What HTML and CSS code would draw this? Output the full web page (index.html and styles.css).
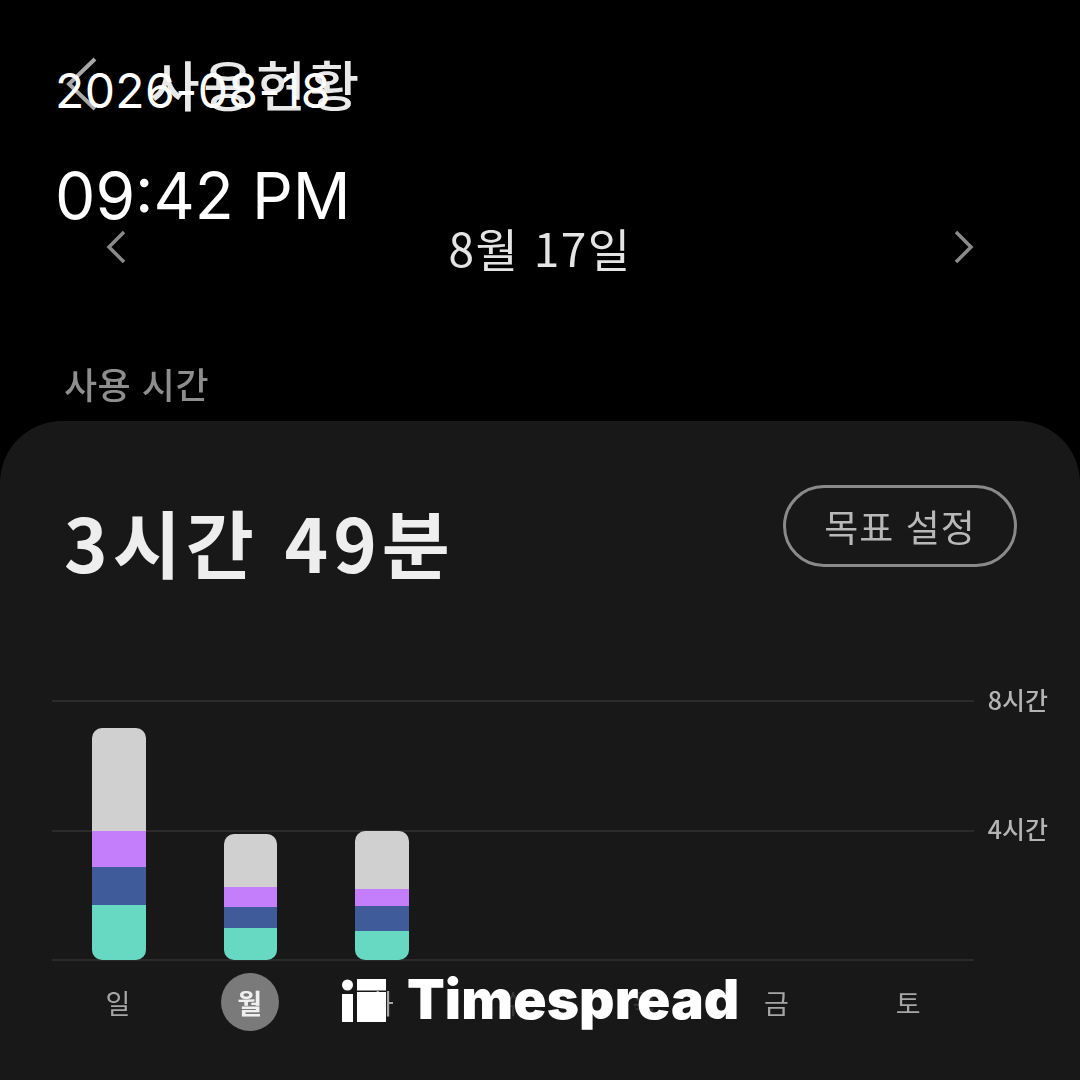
FILE: index.html
```html
<!DOCTYPE html>
<html lang="ko">
<head>
  <meta charset="UTF-8" />
  <meta name="viewport" content="width=device-width, initial-scale=1.0"/>
  <title>사용 현황</title>
  <link rel="stylesheet" href="styles.css">
</head>
<body>

  <div class="screen">
    <header class="topbar">
      <svg class="back" width="40" height="64" viewBox="0 0 40 64">
        <path d="M33 7 L7 32 L33 57" fill="none" stroke="#a8a8a8" stroke-width="4"/>
      </svg>
      <h1 class="title">사용현황</h1>
    </header>

    <div class="date-nav">
      <svg width="22" height="34" viewBox="0 0 22 34">
        <path d="M19 2 L4 17 L19 32" fill="none" stroke="#8a8a8a" stroke-width="3.5"/>
      </svg>
      <span class="date-label">8월 17일</span>
      <svg width="22" height="34" viewBox="0 0 22 34">
        <path d="M3 2 L18 17 L3 32" fill="none" stroke="#8a8a8a" stroke-width="3.5"/>
      </svg>
    </div>

    <div class="section-label">사용 시간</div>

    <section class="card">
      <div class="card-head">
        <div class="total">3시간 49분</div>
        <div class="goal-btn">목표 설정</div>
      </div>

      <div class="chart">
        <div class="grid-row"><span class="grid-line"></span><span class="grid-label">8시간</span></div>
        <div class="grid-row"><span class="grid-line"></span><span class="grid-label">4시간</span></div>
        <div class="grid-row"><span class="grid-line"></span></div>

        <div class="bars">
          <div class="bar">
            <div class="seg seg-other" style="height:103px"></div>
            <div class="seg seg-purple" style="height:36px"></div>
            <div class="seg seg-blue" style="height:38px"></div>
            <div class="seg seg-teal" style="height:55px"></div>
          </div>
          <div class="bar">
            <div class="seg seg-other" style="height:53px"></div>
            <div class="seg seg-purple" style="height:20px"></div>
            <div class="seg seg-blue" style="height:21px"></div>
            <div class="seg seg-teal" style="height:32px"></div>
          </div>
          <div class="bar">
            <div class="seg seg-other" style="height:58px"></div>
            <div class="seg seg-purple" style="height:17px"></div>
            <div class="seg seg-blue" style="height:25px"></div>
            <div class="seg seg-teal" style="height:29px"></div>
          </div>
        </div>
      </div>

      <div class="days">
        <span class="day">일</span>
        <span class="day today">월</span>
        <span class="day">화</span>
        <span class="day day-hidden">수</span>
        <span class="day day-hidden">목</span>
        <span class="day">금</span>
        <span class="day">토</span>
      </div>
    </section>
  </div>

  <!-- stamp and watermark lie over the screenshot -->
  <div class="stamp">
    <div class="stamp-date">2026-08-18</div>
    <div class="stamp-time">09:42 PM</div>
  </div>

  <div class="watermark">
    <svg width="44" height="44" viewBox="0 0 44 44">
      <circle cx="5.5" cy="6" r="5.5" fill="#fff"/>
      <rect x="0" y="15" width="11" height="28" fill="#fff"/>
      <rect x="15" y="0" width="29" height="11.5" fill="#fff"/>
      <rect x="15" y="13" width="29" height="30" fill="#fff"/>
    </svg>
    <span class="wm-text">Timespread</span>
  </div>

</body>
</html>
```

FILE: styles.css
```css
* {
  box-sizing: border-box;
}

body {
  margin: 0;
  width: 1080px;
  height: 1080px;
  overflow: hidden;
  position: relative;
  background: #000;
  font-family: "Noto Sans CJK KR", "Noto Sans", sans-serif;
}

.screen {
  height: 1080px;
  display: flex;
  flex-direction: column;
  filter: blur(0.6px);
}

.topbar {
  height: 128px;
  padding: 52px 0 0 62px;
  display: flex;
  align-items: flex-start;
  gap: 48px;
}

.title {
  margin: 0;
  font-size: 54px;
  line-height: 64px;
  font-weight: 500;
  letter-spacing: 3.5px;
  color: #e8e8e8;
}

.date-nav {
  height: 100px;
  padding: 0 105px;
  margin-top: 69px;
  display: flex;
  align-items: center;
  justify-content: space-between;
}

.date-label {
  font-size: 46px;
  letter-spacing: 1.5px;
  color: #e4e4e4;
}

.section-label {
  margin-top: 62px;
  padding-left: 64px;
  height: 62px;
  font-size: 36px;
  letter-spacing: 0.5px;
  line-height: 48px;
  font-weight: 500;
  color: #8e8e8e;
}

.card {
  flex: 1;
  background: #181818;
  border-radius: 62px 62px 0 0;
  padding: 64px 0 0 52px;
}

.card-head {
  display: flex;
  justify-content: space-between;
  align-items: flex-start;
  padding: 0 63px 0 12px;
  height: 215px;
}

.total {
  font-size: 74px;
  line-height: 90px;
  letter-spacing: 5px;
  margin-top: 11px;
  font-weight: 700;
  color: #eee;
}

.goal-btn {
  width: 234px;
  height: 82px;
  border: 3px solid #8a8a8a;
  border-radius: 41px;
  display: flex;
  align-items: center;
  justify-content: center;
  font-size: 37px;
  letter-spacing: 1px;
  color: #b8b8b8;
}

.chart {
  position: relative;
  width: 996px;
  height: 261px;
  display: flex;
  flex-direction: column;
  justify-content: space-between;
}

.grid-row {
  height: 2px;
  display: flex;
  align-items: center;
}

.grid-line {
  width: 922px;
  height: 2px;
  background: #2b2b2b;
}

.grid-label {
  margin: 0 0 5px 14px;
  font-size: 25px;
  line-height: 2px;
  font-weight: 500;
  color: #b4b4b4;
  white-space: nowrap;
}

.bars {
  position: absolute;
  left: 40px;
  bottom: 1px;
  display: flex;
  align-items: flex-end;
  gap: 78px;
}

.bar {
  width: 53.5px;
  border-radius: 10px;
  overflow: hidden;
  display: flex;
  flex-direction: column;
}

.seg-other { background: #d0d0d0; }
.seg-purple { background: #c47dfb; }
.seg-blue { background: #3f5b9a; }
.seg-teal { background: #67d8c2; }

.days {
  display: flex;
  margin-top: 12px;
  margin-left: 37px;
  gap: 73.7px;
}

.day {
  width: 58px;
  height: 58px;
  border-radius: 50%;
  display: flex;
  align-items: center;
  justify-content: center;
  font-size: 27px;
  color: #a6a6a6;
}

.today {
  background: #7a7a7a;
  color: #f0f0f0;
  font-weight: 700;
}

/* almost gone under the watermark */
.day-hidden {
  color: #333;
}

.stamp {
  position: absolute;
  left: 55px;
  top: 56px;
  font-family: Inter, sans-serif;
  color: #fff;
}

.stamp-date {
  font-size: 48px;
  line-height: 70px;
  letter-spacing: 0.4px;
}

.stamp-time {
  font-size: 64px;
  line-height: 80px;
  margin-top: 30px;
}

.watermark {
  position: absolute;
  left: 342px;
  top: 979px;
  display: flex;
  align-items: flex-start;
  gap: 21px;
}

.wm-text {
  font-family: Inter, sans-serif;
  font-size: 55px;
  line-height: 40px;
  font-weight: 900;
  color: #fff;
  letter-spacing: 0.1px;
}
```
